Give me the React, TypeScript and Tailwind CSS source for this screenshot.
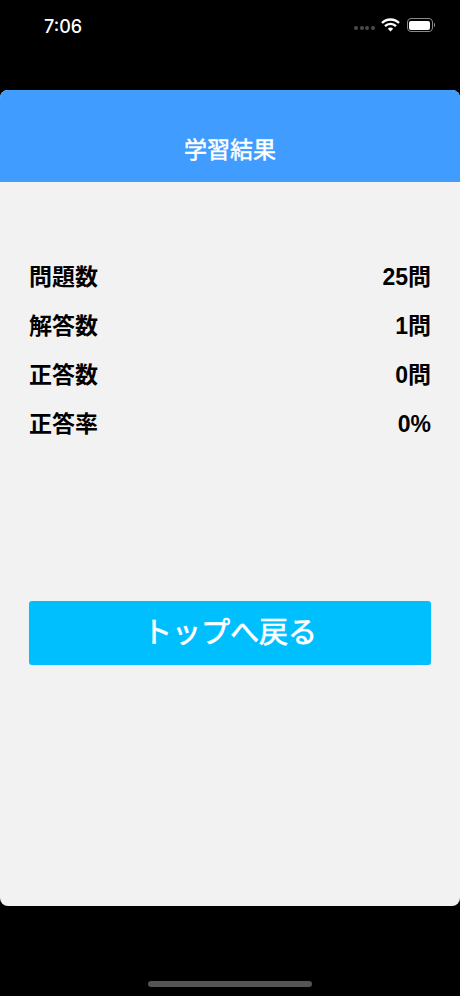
const FONT = "font-['Inter','Noto_Sans_CJK_JP',sans-serif]";

const rows = [
  { label: "問題数", value: "25問" },
  { label: "解答数", value: "1問" },
  { label: "正答数", value: "0問" },
  { label: "正答率", value: "0%" },
];

const StatusBar = () => (
  <div className="h-[90px] flex items-start justify-between pt-[14px] pl-[44px] pr-[25px]">
    <span className="text-white text-[18px] leading-[24px] font-medium mt-[1px]">7:06</span>
    <div className="flex items-center gap-[6px] mt-[4px]">
      <div className="flex gap-[1.5px] mt-[6px]">
        <span className="w-[4px] h-[4px] rounded-full bg-[#4a4a4a]" />
        <span className="w-[4px] h-[4px] rounded-full bg-[#4a4a4a]" />
        <span className="w-[4px] h-[4px] rounded-full bg-[#4a4a4a]" />
        <span className="w-[4px] h-[4px] rounded-full bg-[#4a4a4a]" />
      </div>
      <svg width="19" height="14" viewBox="0 0 19 14" fill="none" stroke="white" strokeWidth="2.4">
        <path d="M1 5a12 12 0 0 1 17 0" />
        <path d="M4 8.2a7.6 7.6 0 0 1 11 0" />
        <path d="M9.5 13.5 L6.8 10.8a3.8 3.8 0 0 1 5.4 0Z" fill="white" stroke="none" />
      </svg>
      <div className="flex items-center ml-[1px]">
        <div className="w-[26px] h-[14px] rounded-[4px] border border-[#8a8a8a] p-[1.5px]">
          <div className="w-full h-full rounded-[2px] bg-white" />
        </div>
        <span className="w-[1.5px] h-[4px] ml-[1px] rounded-r-sm bg-[#8a8a8a]" />
      </div>
    </div>
  </div>
);

export default function App() {
  return (
    <div className={`w-[460px] h-[996px] bg-black flex flex-col overflow-hidden ${FONT}`}>
      <StatusBar />
      <div className="h-[816px] bg-[#f2f2f2] rounded-[8px] overflow-hidden flex flex-col">
        <div className="h-[92px] bg-[#409cff] flex items-end justify-center pb-[17px]">
          <span className="text-white text-[23px] leading-[30px] font-normal [-webkit-text-stroke:0.5px_white]">学習結果</span>
        </div>
        <div className="flex flex-col px-[29px] pt-[71px]">
          {rows.map((row) => (
            <div key={row.label} className="h-[49px] flex items-center justify-between text-black text-[23px] font-bold">
              <span>{row.label}</span>
              <span className="font-['Liberation_Sans','Noto_Sans_CJK_JP',sans-serif]">{row.value}</span>
            </div>
          ))}
        </div>
        <button className="mt-[152px] mx-[29px] h-[64px] rounded-[3px] bg-[#00bfff] text-white text-[29px] font-normal [-webkit-text-stroke:0.7px_white] flex items-center justify-center">
          トップへ戻る
        </button>
      </div>
      <div className="flex-1 flex justify-center pt-[75px]">
        <div className="w-[164px] h-[6px] rounded-full bg-[#555555]" />
      </div>
    </div>
  );
}
